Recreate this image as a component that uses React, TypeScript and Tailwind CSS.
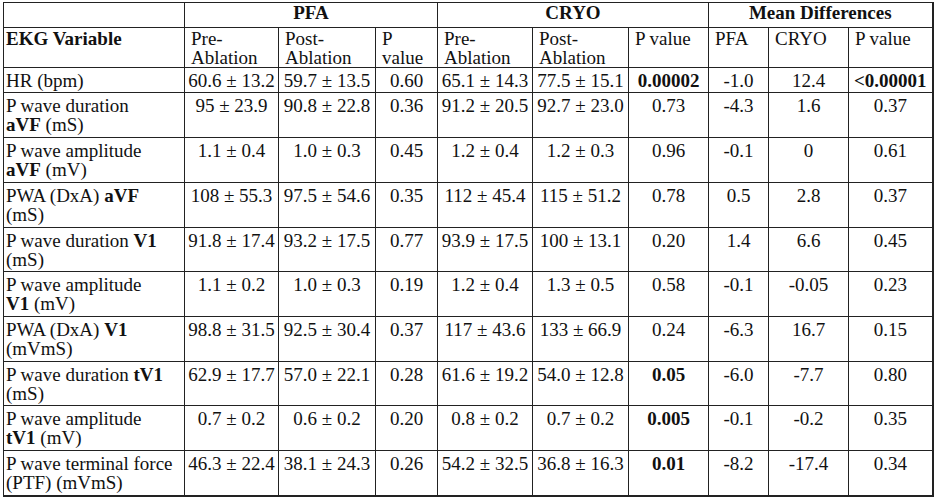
const rows: { label: React.ReactNode; v: string[]; bold?: number[]; h: string }[] = [
  { label: "HR (bpm)", v: ["60.6 ± 13.2", "59.7 ± 13.5", "0.60", "65.1 ± 14.3", "77.5 ± 15.1", "0.00002", "-1.0", "12.4", "<0.00001"], bold: [5, 8], h: "h-[25px]" },
  { label: <>P wave duration<br /><b>aVF</b> (mS)</>, v: ["95 ± 23.9", "90.8 ± 22.8", "0.36", "91.2 ± 20.5", "92.7 ± 23.0", "0.73", "-4.3", "1.6", "0.37"], h: "h-[45px]" },
  { label: <>P wave amplitude<br /><b>aVF</b> (mV)</>, v: ["1.1 ± 0.4", "1.0 ± 0.3", "0.45", "1.2 ± 0.4", "1.2 ± 0.3", "0.96", "-0.1", "0", "0.61"], h: "h-[45px]" },
  { label: <>PWA (DxA) <b>aVF</b><br />(mS)</>, v: ["108 ± 55.3", "97.5 ± 54.6", "0.35", "112 ± 45.4", "115 ± 51.2", "0.78", "0.5", "2.8", "0.37"], h: "h-[45px]" },
  { label: <>P wave duration <b>V1</b><br />(mS)</>, v: ["91.8 ± 17.4", "93.2 ± 17.5", "0.77", "93.9 ± 17.5", "100 ± 13.1", "0.20", "1.4", "6.6", "0.45"], h: "h-[44px]" },
  { label: <>P wave amplitude<br /><b>V1</b> (mV)</>, v: ["1.1 ± 0.2", "1.0 ± 0.3", "0.19", "1.2 ± 0.4", "1.3 ± 0.5", "0.58", "-0.1", "-0.05", "0.23"], h: "h-[45px]" },
  { label: <>PWA (DxA) <b>V1</b><br />(mVmS)</>, v: ["98.8 ± 31.5", "92.5 ± 30.4", "0.37", "117 ± 43.6", "133 ± 66.9", "0.24", "-6.3", "16.7", "0.15"], h: "h-[45px]" },
  { label: <>P wave duration <b>tV1</b><br />(mS)</>, v: ["62.9 ± 17.7", "57.0 ± 22.1", "0.28", "61.6 ± 19.2", "54.0 ± 12.8", "0.05", "-6.0", "-7.7", "0.80"], bold: [5], h: "h-[44px]" },
  { label: <>P wave amplitude<br /><b>tV1</b> (mV)</>, v: ["0.7 ± 0.2", "0.6 ± 0.2", "0.20", "0.8 ± 0.2", "0.7 ± 0.2", "0.005", "-0.1", "-0.2", "0.35"], bold: [5], h: "h-[45px]" },
  { label: <>P wave terminal force<br />(PTF) (mVmS)</>, v: ["46.3 ± 22.4", "38.1 ± 24.3", "0.26", "54.2 ± 32.5", "36.8 ± 16.3", "0.01", "-8.2", "-17.4", "0.34"], bold: [5], h: "h-[45px]" },
];

const cell = "border border-[#222] align-top";

export default function App() {
  return (
    <div className="w-[936px] h-[498px] bg-white pt-[2px] pl-[3px] text-[#111] font-['Liberation_Serif','Times_New_Roman',serif] text-[19px] leading-[19px]">
      <table className="table-fixed border-collapse border-r-2 border-b-2 border-[#222]">
        <colgroup>
          <col className="w-[181px]" />
          <col className="w-[94px]" />
          <col className="w-[97px]" />
          <col className="w-[62px]" />
          <col className="w-[95px]" />
          <col className="w-[96px]" />
          <col className="w-[80px]" />
          <col className="w-[60px]" />
          <col className="w-[80px]" />
          <col className="w-[84px]" />
        </colgroup>
        <thead>
          <tr className="h-[25px]">
            <th className={cell}></th>
            <th colSpan={3} className={`${cell} text-center font-bold align-middle`}>PFA</th>
            <th colSpan={3} className={`${cell} text-center font-bold align-middle`}>CRYO</th>
            <th colSpan={3} className={`${cell} text-center font-bold align-middle`}>Mean Differences</th>
          </tr>
          <tr className="h-[39px]">
            <th className={`${cell} text-left font-bold pl-[2px] pt-[1px]`}>EKG Variable</th>
            {["Pre-\nAblation", "Post-\nAblation", "P\nvalue", "Pre-\nAblation", "Post-\nAblation", "P value", "PFA", "CRYO", "P value"].map((t, i) => (
              <th key={i} className={`${cell} text-left font-normal pl-[6px] pt-[1px] whitespace-pre-line`}>{t}</th>
            ))}
          </tr>
        </thead>
        <tbody>
          {rows.map((r, i) => (
            <tr key={i} className={r.h}>
              <td className={`${cell} pl-[2px] pt-[3px] pr-[2px] whitespace-nowrap`}>{r.label}</td>
              {r.v.map((x, j) => (
                <td key={j} className={`${cell} text-center pt-[3px] ${r.bold?.includes(j) ? "font-bold" : ""}`}>{x}</td>
              ))}
            </tr>
          ))}
        </tbody>
      </table>
    </div>
  );
}
